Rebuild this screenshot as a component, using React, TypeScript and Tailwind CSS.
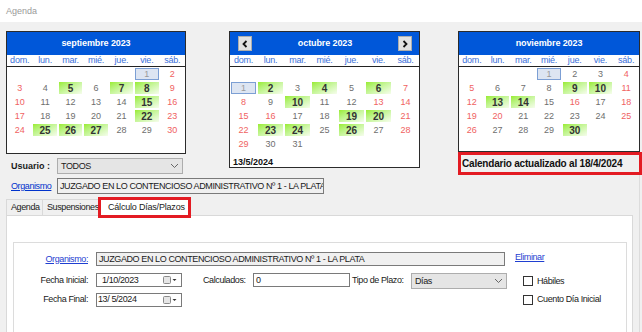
type Kind = "n" | "r" | "g" | "t" | "x";
type Cell = { d: string; k: Kind };

const parse = (s: string): Cell[] =>
  s.split(",").map((t) => (t === "-" ? { d: "", k: "x" } : { d: t.slice(0, -1), k: t.slice(-1) as Kind }));

const EMPTY = "-,-,-,-,-,-,-";

const september = [
  "-,-,-,-,-,1t,2r",
  "3r,4n,5g,6n,7g,8g,9r",
  "10r,11n,12n,13n,14n,15g,16r",
  "17r,18n,19n,20n,21n,22g,23r",
  "24r,25g,26g,27g,28n,29n,30r",
  EMPTY,
].map(parse);

const october = [
  EMPTY,
  "1t,2g,3n,4g,5n,6g,7r",
  "8r,9n,10g,11n,12n,13r,14r",
  "15r,16r,17n,18n,19g,20g,21r",
  "22r,23g,24g,25n,26g,27n,28r",
  "29r,30n,31n,-,-,-,-",
].map(parse);

const november = [
  "-,-,-,1t,2n,3n,4r",
  "5r,6n,7n,8n,9g,10g,11r",
  "12r,13g,14g,15n,16r,17n,18r",
  "19r,20r,21n,22n,23n,24n,25r",
  "26r,27n,28n,29n,30g,-,-",
  EMPTY,
].map(parse);

const dayNames = ["dom.", "lun.", "mar.", "mié.", "jue.", "vie.", "sáb."];

function DayCell({ cell }: { cell: Cell }) {
  let look = "text-[9px] text-[#6e6e6e]";
  if (cell.k === "r") look = "text-[9px] text-[#f06262]";
  if (cell.k === "g") look = "bg-linear-to-br from-[#9aec2a] to-[#f6fdec] text-[10px] font-bold text-[#333]";
  if (cell.k === "t") look = "border border-[#7c9fd4] bg-[#dde5f2] text-[9px] text-[#9a9a9a]";
  return (
    <div className="flex h-[14px] items-center">
      <span className={`mx-[1px] flex h-[12px] flex-1 items-center justify-center tracking-normal ${look}`}>{cell.d}</span>
    </div>
  );
}

function NavButton({ dir }: { dir: "l" | "r" }) {
  return (
    <div className="flex h-[15px] w-[14px] items-center justify-center border border-[#adadad] bg-[#e1e1e1]">
      <svg width="6" height="8" viewBox="0 0 6 8">
        <polyline
          points={dir === "l" ? "4.5,1 1.5,4 4.5,7" : "1.5,1 4.5,4 1.5,7"}
          fill="none"
          stroke="#111"
          strokeWidth="1.8"
        />
      </svg>
    </div>
  );
}

function MonthCal({
  title,
  rows,
  className,
  nav,
  footer,
}: {
  title: string;
  rows: Cell[][];
  className: string;
  nav?: boolean;
  footer?: string;
}) {
  return (
    <div className={`flex flex-col border border-[#2b2b2b] bg-white ${className}`}>
      <div
        className={`flex h-[23px] items-center bg-[#0057d9] text-[9px] font-bold tracking-[-0.1px] text-white ${
          nav ? "justify-between pl-[8px] pr-[7px]" : "justify-center"
        }`}
      >
        {nav && <NavButton dir="l" />}
        <span>{title}</span>
        {nav && <NavButton dir="r" />}
      </div>
      <div className="grid h-[12px] grid-cols-7 items-center border-b border-[#222] text-[9px] tracking-[-0.2px] text-[#3b6fd9]">
        {dayNames.map((n) => (
          <span key={n} className="text-center">
            {n}
          </span>
        ))}
      </div>
      {rows.map((row, i) => (
        <div key={i} className="grid grid-cols-7">
          {row.map((c, j) => (
            <DayCell key={j} cell={c} />
          ))}
        </div>
      ))}
      {footer && (
        <div className="flex h-[16px] items-end pl-[3px] text-[9px] font-bold leading-[10px] tracking-normal text-[#111]">
          {footer}
        </div>
      )}
    </div>
  );
}

function Chevron() {
  return (
    <svg width="9" height="6" viewBox="0 0 9 6">
      <polyline points="1,1 4.5,4.5 8,1" fill="none" stroke="#666" strokeWidth="1" />
    </svg>
  );
}

function DateIcon() {
  return (
    <svg width="16" height="10" viewBox="0 0 16 10">
      <rect x="1.5" y="1.5" width="7" height="7" rx="1" fill="#e6e6e6" stroke="#8a8a8a" />
      <polygon points="10.5,4 14.5,4 12.5,6" fill="#333" />
    </svg>
  );
}

function DateBox({ value, pad }: { value: string; pad: string }) {
  return (
    <div className="ml-[8px] flex h-[14px] w-[86px] items-center justify-between border border-[#7a7a7a] bg-white">
      <span className={`whitespace-pre ${pad}`}>{value}</span>
      <span className="mr-[3px] flex">
        <DateIcon />
      </span>
    </div>
  );
}

function CheckBox() {
  return <div className="h-[10px] w-[10px] border border-[#333] bg-white" />;
}

export default function App() {
  return (
    <div className="flex h-[332px] w-[642px] flex-col overflow-hidden bg-[#f0f0f0] font-['Liberation_Sans',Arial,sans-serif] text-[9px] leading-[11px] tracking-[-0.4px] text-[#1a1a1a]">
      <div className="flex h-[22px] shrink-0 items-center bg-white pl-[6px] tracking-normal text-[#9a9a9a]">
        Agenda
      </div>

      <div className="flex shrink-0 items-start pl-[6px] pt-[9px]">
        <div className="flex w-[180px] flex-col">
          <MonthCal title="septiembre 2023" rows={september} className="h-[123px] w-[180px]" />
          <div className="mt-[4px] flex h-[16px] items-center">
            <span className="w-[51px] pl-[5px] font-bold tracking-normal">Usuario :</span>
            <div className="flex h-[16px] w-[126px] items-center justify-between border border-[#adadad] bg-[#e5e5e5] pl-[3px] pr-[3px]">
              <span>TODOS</span>
              <Chevron />
            </div>
          </div>
        </div>

        <div className="ml-[43px]">
          <MonthCal title="octubre 2023" rows={october} nav footer="13/5/2024" className="h-[137px] w-[191px]" />
        </div>

        <div className="ml-[38px] flex flex-col">
          <MonthCal title="noviembre 2023" rows={november} className="h-[121px] w-[182px]" />
          <div className="flex h-[23px] w-[184px] items-center border-[3px] border-[#e31b23] pl-[1px] text-[10px] font-bold tracking-[-0.2px] text-[#111]">
            Calendario actualizado al 18/4/2024
          </div>
        </div>
      </div>

      <div className="flex shrink-0">
        <div className="flex w-[639px] flex-col">
          <div className="mt-[3px] flex h-[16px] items-center">
            <span className="w-[57px] pl-[11px] text-[#0033cc] underline">Organismo</span>
            <div className="flex h-[16px] w-[267px] items-center overflow-hidden whitespace-nowrap border border-[#7a7a7a] bg-[#f0f0f0] pl-[2px]">
              JUZGADO EN LO CONTENCIOSO ADMINISTRATIVO Nº 1 - LA PLATA
            </div>
          </div>

          <div className="mt-[3px] flex h-[18px] items-end pl-[6px]">
            <div className="flex h-[16px] w-[37px] items-center border border-b-0 border-[#d9d9d9] pl-[4px]">Agenda</div>
            <div className="flex h-[16px] w-[58px] items-center overflow-hidden whitespace-nowrap border-r border-t border-[#d9d9d9] pl-[4px]">
              Suspensiones
            </div>
            <div className="relative z-10 -mb-[1px] -ml-[2px] flex h-[19px] w-[91px] items-center border border-b-0 border-[#d9d9d9] bg-white pl-[8px] tracking-[-0.2px]">
              Cálculo Días/Plazos
              <div className="absolute -bottom-[2px] -left-[2px] -right-[2px] -top-[1px] border-[3px] border-[#e31b23]" />
            </div>
          </div>

          <div className="ml-[6px] flex h-[150px] w-[627px] flex-col border border-[#d9d9d9] bg-white pl-[6px] pr-[5px] pt-[26px]">
            <div className="flex h-[140px] flex-col border border-[#dcdcdc] pt-[9px]">
              <div className="flex h-[14px] items-center">
                <span className="w-[74px] text-right text-[#1f3fd1] underline">Organismo:</span>
                <div className="ml-[8px] flex h-[14px] w-[409px] items-center whitespace-nowrap border border-[#7a7a7a] bg-[#f0f0f0] pl-[2px]">
                  JUZGADO EN LO CONTENCIOSO ADMINISTRATIVO Nº 1 - LA PLATA
                </div>
                <span className="ml-[10px] -mt-[3px] text-[#1f3fd1] underline">Eliminar</span>
              </div>

              <div className="mt-[7px] flex h-[16px] items-start">
                <span className="flex h-[14px] w-[74px] items-center justify-end">Fecha Inicial:</span>
                <DateBox value="1/10/2023" pad="pl-[5px]" />
                <span className="ml-[21px] flex h-[14px] w-[50px] items-center">Calculados:</span>
                <div className="flex h-[14px] w-[97px] items-center border border-[#7a7a7a] bg-white pl-[2px]">0</div>
                <span className="ml-[2px] flex h-[14px] w-[59px] items-center">Tipo de Plazo:</span>
                <div className="flex h-[16px] w-[96px] items-center justify-between border border-[#adadad] bg-[#e5e5e5] pl-[3px] pr-[3px]">
                  <span>Días</span>
                  <Chevron />
                </div>
                <div className="ml-[16px] flex h-[16px] items-center">
                  <CheckBox />
                  <span className="ml-[4px]">Hábiles</span>
                </div>
              </div>

              <div className="mt-[3px] flex h-[15px] items-center">
                <span className="w-[74px] text-right">Fecha Final:</span>
                <DateBox value="13/ 5/2024" pad="pl-[1px]" />
                <div className="ml-[341px] flex items-center">
                  <CheckBox />
                  <span className="ml-[4px]">Cuento Día Inicial</span>
                </div>
              </div>
            </div>
          </div>
        </div>
        <div className="w-[3px] border-l border-[#dcdcdc]" />
      </div>
    </div>
  );
}
